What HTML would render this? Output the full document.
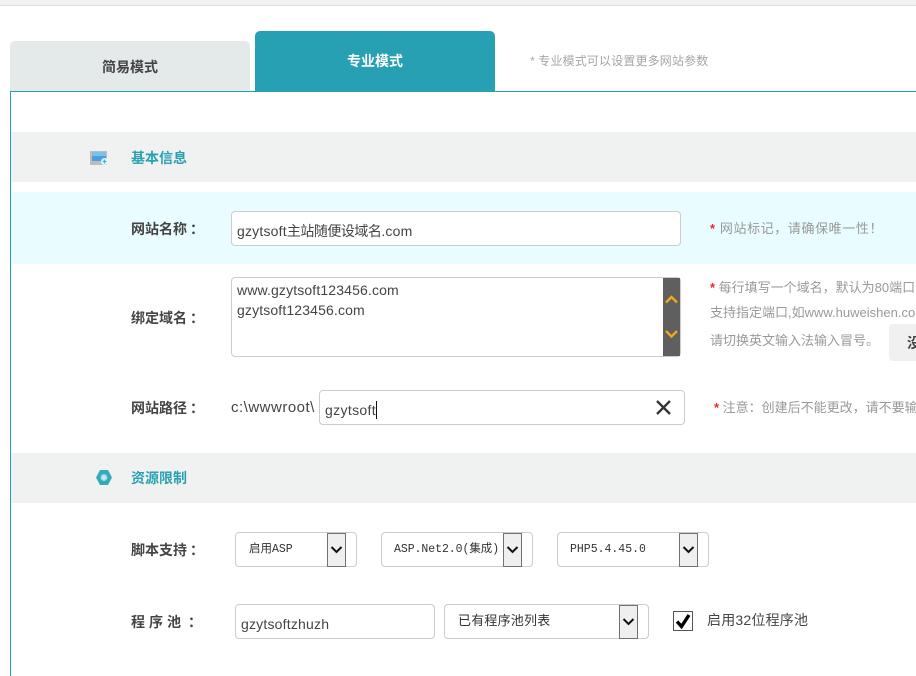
<!DOCTYPE html>
<html lang="zh"><head><meta charset="utf-8"><style>
html,body{margin:0;padding:0;background:#fff}
#p{position:relative;width:916px;height:676px;overflow:hidden;background:#fff;font-family:"Liberation Sans","Noto Sans CJK SC",sans-serif;font-size:14px;color:#444}
#p div{position:absolute;white-space:nowrap;box-sizing:border-box}
.t{line-height:20px}
.lb{font-weight:bold;font-size:14px;color:#444}
.lb i{font-style:normal;position:relative;left:3px}
.sec{font-weight:bold;font-size:14px;color:#2aa0b2}
.box{background:#fff;border:1px solid #ccc;border-radius:4px}
.hint{font-size:13px;color:#999}
.hint b{color:#f22;font-weight:bold}
.mono{font-family:"Liberation Mono","Noto Sans CJK SC",monospace;font-size:11.500px;color:#333}
.arrow{width:19px;height:34px;background:#efefef;border:1px solid #707070}
.arrow svg{position:absolute;left:2px;top:10px}
</style></head><body><div id="p">
<div style="left:0;top:0;width:916px;height:6px;background:#f1f2f2;border-bottom:1px solid #ddd"></div>

<div style="left:10px;top:41px;width:240px;height:50px;background:#e4e9e9;border-radius:5px 5px 0 0"></div>
<div class="t" style="left:10px;top:57px;width:240px;text-align:center;font-weight:bold;font-size:14px;color:#444">简易模式</div>
<div style="left:255px;top:31px;width:240px;height:60px;background:#26a0b2;border-radius:5px 5px 0 0"></div>
<div class="t" style="left:255px;top:51px;width:240px;text-align:center;font-weight:bold;font-size:14px;color:#fff">专业模式</div>
<div class="t" style="left:530px;top:51px;font-size:12px;color:#a5a5a5;letter-spacing:.15px">* 专业模式可以设置更多网站参数</div>

<div style="left:10px;top:91px;width:906px;height:1px;background:#26a0b2"></div>
<div style="left:10px;top:91px;width:1px;height:585px;background:#26a0b2"></div>

<div style="left:11px;top:132px;width:905px;height:50px;background:#f0f2f2"></div>
<svg style="position:absolute;left:89px;top:150px" width="20" height="16" viewBox="0 0 20 16"><rect x="1" y="1" width="17" height="14" fill="#bdbdbd"/><rect x="3" y="2" width="14" height="9" fill="#4a9fdc"/><rect x="3" y="2" width="14" height="4" fill="#7cc0ec"/><circle cx="15.500" cy="11.500" r="3.500" fill="#e8f6fc"/><path d="M13.500 11.500H17.500M15.500 9.500V13.500" stroke="#3cb0e8" stroke-width="1.200"/></svg>
<div class="t sec" style="left:131px;top:148px">基本信息</div>

<div style="left:11px;top:192px;width:905px;height:72px;background:#e9fcff"></div>
<div class="t lb" style="left:131px;top:219px">网站名称<i>：</i></div>
<div class="box" style="left:231px;top:211px;width:450px;height:35px"></div>
<div class="t" style="left:237px;top:221px;font-size:14px;color:#444;letter-spacing:.2px">gzytsoft<span style="letter-spacing:-.5px">主站随便设域名</span>.com</div>
<div class="t hint" style="left:710px;top:219px;letter-spacing:.6px"><b>*</b> 网站标记，请确保唯一性！</div>

<div class="t lb" style="left:131px;top:308px">绑定域名<i>：</i></div>
<div class="box" style="left:231px;top:277px;width:450px;height:80px"></div>
<div class="t" style="left:237px;top:280px;color:#444;letter-spacing:.14px">www.gzytsoft123456.com</div>
<div class="t" style="left:237px;top:300px;color:#444;letter-spacing:.14px">gzytsoft123456.com</div>
<div style="left:663px;top:278px;width:17px;height:78px;background:#5f5f5f"></div>
<svg style="position:absolute;left:664px;top:294px" width="15" height="50" viewBox="0 0 15 50"><path d="M2 8.500L7.500 3L13 8.500M2 37L7.500 42.500L13 37" fill="none" stroke="#f0a81c" stroke-width="2.400"/></svg>

<div class="t hint" style="left:710px;top:278px"><b>*</b> 每行填写一个域名，默认为80端口</div>
<div class="t hint" style="left:710px;top:303px">支持指定端口,如www.huweishen.com</div>
<div class="t hint" style="left:710px;top:331px">请切换英文输入法输入冒号。</div>
<div style="left:889px;top:324px;width:40px;height:37px;background:#f0f0f0;border-radius:4px"></div>
<div class="t" style="left:907px;top:333px;font-size:14px;font-weight:bold;color:#444">没</div>

<div class="t lb" style="left:131px;top:398px">网站路径<i>：</i></div>
<div class="t" style="left:231px;top:398px;color:#444;font-size:15px;letter-spacing:.5px">c:\wwwroot\</div>
<div class="box" style="left:319px;top:390px;width:366px;height:35px"></div>
<div class="t" style="left:325px;top:400px;color:#444;letter-spacing:.35px">gzytsoft</div>
<div style="left:376px;top:401px;width:1px;height:18px;background:#111"></div>
<svg style="position:absolute;left:655px;top:399px" width="17" height="17" viewBox="0 0 17 17"><path d="M2 2L15 15M15 2L2 15" stroke="#333" stroke-width="2.300" fill="none"/></svg>
<div class="t hint" style="left:714px;top:398px"><b>*</b> 注意：创建后不能更改，请不要输入中文</div>

<div style="left:11px;top:453px;width:905px;height:50px;background:#f0f2f2"></div>
<svg style="position:absolute;left:95px;top:469px" width="18" height="18" viewBox="0 0 18 18"><defs><radialGradient id="g"><stop offset="0" stop-color="#e8f6f8"/><stop offset="1" stop-color="#8fd2dc"/></radialGradient></defs><path d="M5 1H13L17 8.500L13 16H5L1 8.500Z" fill="#35aabd"/><circle cx="9" cy="8.500" r="3.500" fill="url(#g)"/></svg>
<div class="t sec" style="left:131px;top:468px">资源限制</div>

<div class="t lb" style="left:131px;top:540px">脚本支持<i>：</i></div>
<div class="box" style="left:235px;top:532px;width:122px;height:35px"></div>
<div class="t mono" style="left:249px;top:540px">启用ASP</div>
<div class="arrow" style="left:327px;top:533px"><svg width="13" height="12" viewBox="0 0 13 12"><path d="M1.500 3L6.500 8L11.500 3" fill="none" stroke="#111" stroke-width="2"/></svg></div>

<div class="box" style="left:381px;top:532px;width:152px;height:35px"></div>
<div class="t mono" style="left:394px;top:540px;letter-spacing:-.05px">ASP.Net2.0(集成)</div>
<div class="arrow" style="left:503px;top:533px"><svg width="13" height="12" viewBox="0 0 13 12"><path d="M1.500 3L6.500 8L11.500 3" fill="none" stroke="#111" stroke-width="2"/></svg></div>

<div class="box" style="left:557px;top:532px;width:152px;height:35px"></div>
<div class="t mono" style="left:570px;top:540px">PHP5.4.45.0</div>
<div class="arrow" style="left:679px;top:533px"><svg width="13" height="12" viewBox="0 0 13 12"><path d="M1.500 3L6.500 8L11.500 3" fill="none" stroke="#111" stroke-width="2"/></svg></div>

<div class="t lb" style="left:131px;top:612px;letter-spacing:4px">程序池<i>：</i></div>
<div class="box" style="left:235px;top:604px;width:200px;height:35px"></div>
<div class="t" style="left:241px;top:614px;color:#444;letter-spacing:.2px">gzytsoftzhuzh</div>
<div class="box" style="left:444px;top:604px;width:205px;height:35px"></div>
<div class="t mono" style="left:458px;top:612px;font-size:13px;letter-spacing:.2px">已有程序池列表</div>
<div class="arrow" style="left:619px;top:605px"><svg width="13" height="12" viewBox="0 0 13 12"><path d="M1.500 3L6.500 8L11.500 3" fill="none" stroke="#111" stroke-width="2"/></svg></div>

<div style="left:673px;top:611px;width:20px;height:20px;border:1px solid #555;background:#fff"></div>
<svg style="position:absolute;left:673px;top:611px" width="20" height="20" viewBox="0 0 20 20"><path d="M4 10.500L8.500 15.500L16 4" fill="none" stroke="#000" stroke-width="3.400"/></svg>
<div class="t" style="left:707px;top:610px;font-size:14px;color:#444;letter-spacing:.2px">启用32位程序池</div>
</div></body></html>
